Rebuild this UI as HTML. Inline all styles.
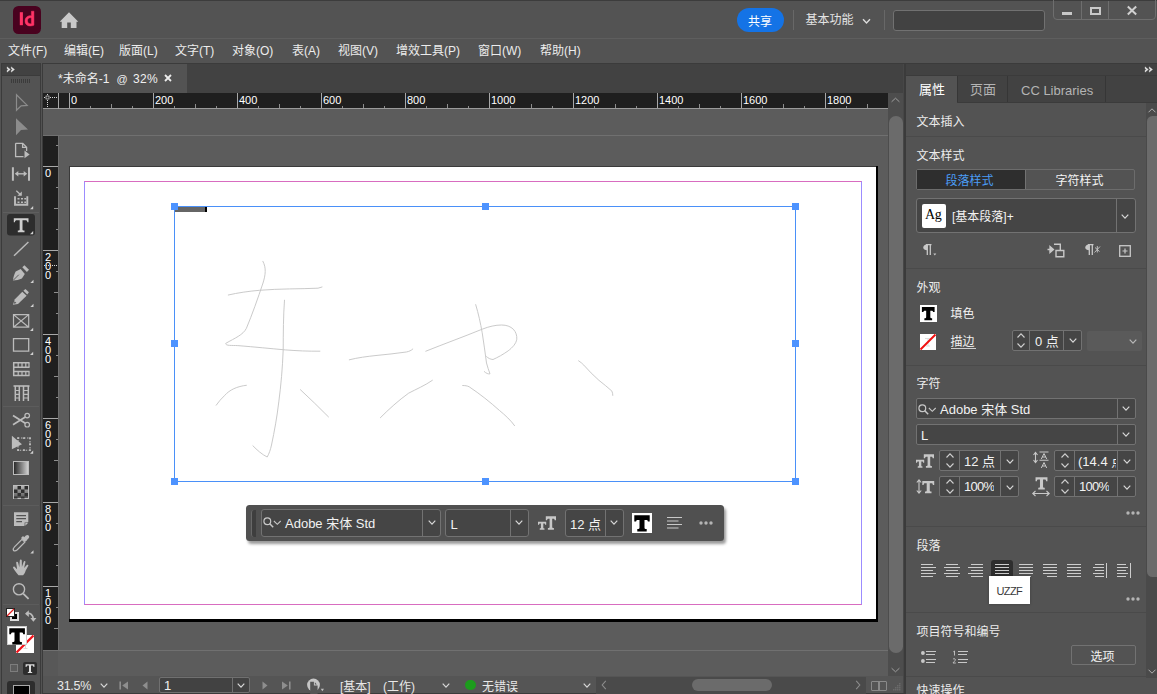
<!DOCTYPE html>
<html lang="zh">
<head>
<meta charset="utf-8">
<title>InDesign</title>
<style>
*{box-sizing:border-box;margin:0;padding:0}
html,body{width:1157px;height:694px;overflow:hidden;background:#535353;font-family:"Liberation Sans","Noto Sans CJK SC",sans-serif;font-size:12px;color:#e0e0e0}
.abs,#root *{position:absolute}
#root{position:relative;width:1157px;height:694px;overflow:hidden;background:#535353}
.t{white-space:nowrap;line-height:14px;color:#e6e6e6}
svg{overflow:visible}
.rl{font-size:11px;line-height:11px;color:#fff;white-space:nowrap}
.h{width:7px;height:7px;background:#4d93ff}
.dd{background:#454545;border:1px solid #727272;border-radius:3px}
.dv{width:1px;background:#727272}
/* top */
#appbar{left:0;top:0;width:1157px;height:39px;background:#535353}
#topline{left:0;top:0;width:1157px;height:1px;background:#3c3c3c}
#sep1{left:0;top:38px;width:1157px;height:2px;background:#5e5e5e}
#menubar{left:0;top:39px;width:1157px;height:23px;background:#535353}
#menubar .t{top:4.800px;font-size:12px;color:#ececec;margin-left:-1px}
#work{left:0;top:62px;width:1157px;height:632px;background:#535353}
</style>
</head>
<body>
<div id="root">
<!-- APPBAR -->
<div id="appbar"></div>
<div id="topline"></div>
<div id="sep1"></div>
<div id="menubar">
<span class="t" style="left:9px">文件(F)</span>
<span class="t" style="left:65px">编辑(E)</span>
<span class="t" style="left:120px">版面(L)</span>
<span class="t" style="left:176px">文字(T)</span>
<span class="t" style="left:233px">对象(O)</span>
<span class="t" style="left:293px">表(A)</span>
<span class="t" style="left:339px">视图(V)</span>
<span class="t" style="left:397px">增效工具(P)</span>
<span class="t" style="left:479px">窗口(W)</span>
<span class="t" style="left:541px">帮助(H)</span>
</div>
<div id="work"></div>

<!-- Id logo -->
<div style="left:13px;top:6px;width:28px;height:28px;background:#49021f;border-radius:5.5px"></div>
<svg style="left:13px;top:6px" width="28" height="28" viewBox="0 0 28 28"><rect x="6.800" y="6.200" width="3.100" height="13" fill="#ff3366"/><path d="M20.9 5.2v14c-1 .45-2.300.75-3.700.75-3 0-5.200-1.700-5.200-5.050 0-3.100 2.200-5.250 5.300-5.250.4 0 .75.020 1.100.10V5.200zM18.400 11.900c-.3-.1-.65-.15-1.050-.15-1.700 0-2.850 1.200-2.850 3.050 0 2.100 1.250 3 2.750 3 .45 0 .85-.05 1.150-.17z" fill="#ff3366" stroke="#ff3366" stroke-width="0.500"/></svg>
<!-- home -->
<svg style="left:59px;top:11px" width="20" height="18" viewBox="0 0 20 18"><path d="M10 1.300L19.300 10.800H17.500V17H11.800V11.400H8.200V17H2.700V10.800H0.700z" fill="#c9c9c9"/></svg>
<!-- share -->
<div style="left:737px;top:8px;width:47px;height:24px;border-radius:12px;background:#1473e6"></div>
<span class="t" style="left:748.0px;top:14.5px;font-size:12px;color:#fff">共享</span>
<div style="left:792.500px;top:10px;width:1px;height:20px;background:#686868"></div>
<span class="t" style="left:805.5px;top:12.8px;font-size:12px;color:#e4e4e4">基本功能</span>
<svg style="left:862px;top:18.200px" width="9" height="7" viewBox="0 0 9 7"><path d="M1 1.200L4.500 5L8 1.200" fill="none" stroke="#dcdcdc" stroke-width="1.400"/></svg>
<div style="left:883.500px;top:10px;width:1px;height:20px;background:#686868"></div>
<div style="left:893px;top:10px;width:152px;height:21px;background:#424242;border:1px solid #717171;border-radius:3px"></div>
<!-- window controls -->
<div style="left:1053px;top:-2px;width:103px;height:22px;border:1px solid #6e6e6e;border-radius:0 0 4px 4px"></div>
<div style="left:1081px;top:1px;width:1px;height:18px;background:#6e6e6e"></div>
<div style="left:1108px;top:1px;width:1px;height:18px;background:#6e6e6e"></div>
<div style="left:1062px;top:12px;width:10px;height:3px;background:#c8c8c8"></div>
<div style="left:1090px;top:7px;width:11px;height:8px;border:2px solid #c8c8c8"></div>
<svg style="left:1127px;top:6px" width="10" height="9" viewBox="0 0 10 9"><path d="M0.800 0.500L9.200 8.500M9.200 0.500L0.800 8.500" stroke="#d0d0d0" stroke-width="2"/></svg>
<!--APPBAR-ITEMS-->

<div id="tb" style="left:1px;top:63px;width:40px;height:640px;background:#3b3b3b"></div>
<div style="left:2px;top:64px;width:38px;height:11px;background:#424242"></div>
<svg style="left:6px;top:66px" width="10" height="7" viewBox="0 0 10 7"><path d="M1 0.800L4.400 3.500L1 6.200V4.400L2.300 3.500L1 2.600zM5.200 0.800L8.600 3.500L5.200 6.200V4.400L6.500 3.500L5.200 2.600z" fill="#e4e4e4" stroke="#e4e4e4" stroke-width="0.300"/></svg>
<div style="left:2px;top:76px;width:38px;height:620px;background:#535353"></div>
<div style="left:11px;top:79px;width:20px;height:4px;background:repeating-linear-gradient(90deg,#3b3b3b 0,#3b3b3b 1px,transparent 1px,transparent 2px)"></div>
<svg id="tools" style="left:0;top:0" width="44" height="694" viewBox="0 0 44 694" fill="none">
<!-- selection -->
<path d="M16.500 94.800V110.300L21.100 105.800L27.200 105.400z" stroke="#8c8c8c" stroke-width="1.200" transform="translate(0,0)"/>
<!-- direct selection -->
<path d="M16 118.300V135.200L21 129.900L28 129.400z" fill="#8c8c8c"/>
<!-- page tool -->
<path d="M15.600 143.300H22.800L26.600 147.200V151M22.600 143.500V147.400H26.400M15.600 143.300V156.600H23.500" stroke="#bcbcbc" stroke-width="1.300"/>
<path d="M24.500 150.500V158.300L29.600 154.400z" fill="#bcbcbc"/>
<!-- gap tool -->
<path d="M12.900 167.200V180.800M29 167.200V180.800" stroke="#bcbcbc" stroke-width="2"/>
<path d="M17.500 173.800H24.500" stroke="#bcbcbc" stroke-width="1.400"/>
<path d="M14.800 173.800L18.300 171V176.600zM27.200 173.800L23.700 171V176.600z" fill="#bcbcbc"/>
<!-- content collector -->
<path d="M15 196.300V204.700H27.300V196.300" stroke="#bcbcbc" stroke-width="1.900"/>
<path d="M17.500 198h2v1.600h-2zM21 198h2v1.600h-2zM24.300 198h1.800v1.600h-1.800zM17.500 201.400h2v1.600h-2zM21 201.400h2v1.600h-2zM24.300 201.400h1.800v1.600h-1.800z" fill="#bcbcbc"/>
<path d="M16.300 190.800L20.300 194.400" stroke="#bcbcbc" stroke-width="1.300"/>
<path d="M21.800 191.600V195.800H17.400z" fill="#bcbcbc"/>
<path d="M33.200 209.300h-3.200l3.200-3.200z" fill="#d0d0d0"/>
<!-- separator -->
<path d="M3 212.500H39" stroke="#5e5e5e" stroke-width="1"/>
<!-- T tool selected -->
<rect x="7" y="214" width="28" height="21.500" rx="3" fill="#2d2d2d"/>
<path d="M13.800 218.200H28.500V222.300H27.400C27.200 220.700 26.800 220.300 25.200 220.300H22.500V229.400C22.500 230.200 22.800 230.400 24.500 230.500V232.300H17.800V230.500C19.400 230.400 19.700 230.200 19.700 229.400V220.300H17.100C15.500 220.300 15.100 220.700 14.900 222.300H13.800z" fill="#cfcfcf"/>
<path d="M33.200 234.300h-3.200l3.200-3.200z" fill="#d0d0d0"/>
<!-- line -->
<path d="M14 255.800L28.400 242" stroke="#bcbcbc" stroke-width="1.400"/>
<!-- pen -->
<path d="M12.900 280.600C13.300 277.300 14.300 274 15.700 271.600L20.700 268.900L24.800 273.900L21.900 278.600C19.300 279.800 16.200 280.400 12.900 280.600z" fill="#bcbcbc"/>
<path d="M13.300 280.200L18.800 274.700" stroke="#535353" stroke-width="0.900"/>
<path d="M22.300 267.200L24.400 265.200L29 269.800L26.900 272z" fill="#bcbcbc"/>
<path d="M33.500 283h-3.200l3.200-3.200z" fill="#d0d0d0"/>
<!-- pencil -->
<path d="M12.900 304.700L14.900 299.200L22.300 291.800L26.600 295.700L18 303.900z" fill="#bcbcbc"/>
<path d="M23.400 290.700L25.400 289.100L28.900 292.200L27.300 294.500z" fill="#bcbcbc"/>
<path d="M14.600 301.200L16.400 303L13.800 303.800z" fill="#535353"/>
<path d="M33.500 307h-3.200l3.200-3.200z" fill="#d0d0d0"/>
<!-- rect frame -->
<path d="M13.500 314.600H28.700V327.200H13.500zM13.500 314.600L28.700 327.200M28.700 314.600L13.500 327.200" stroke="#bcbcbc" stroke-width="1.200"/>
<path d="M33.200 331h-3.200l3.200-3.200z" fill="#d0d0d0"/>
<!-- rect -->
<path d="M13.500 338.600H28.700V351.100H13.500z" stroke="#bcbcbc" stroke-width="1.300"/>
<path d="M33.200 355h-3.200l3.200-3.200z" fill="#d0d0d0"/>
<!-- h grid -->
<path d="M13 362.800H29.500M13 367.300H29.500M13 371.500H29.500M13 375.500H29.500M13.700 362.800V375.500" stroke="#bcbcbc" stroke-width="1.500"/>
<path d="M18.200 362.800V367.300M22 362.800V367.300M25.800 362.800V367.300M29 362.800V367.300M18.200 371.500V375.500M22 371.500V375.500M25.800 371.500V375.500M29 371.500V375.500" stroke="#bcbcbc" stroke-width="1.200"/>
<!-- v grid -->
<path d="M13.500 386H29.500" stroke="#bcbcbc" stroke-width="1.600"/>
<path d="M15.300 386V401M19.300 386V401M23.500 386V401M28.300 386V401" stroke="#bcbcbc" stroke-width="1.500"/>
<path d="M15.300 390.500H19.300M15.300 394.300H19.300M15.300 398H19.300M23.500 390.500H28.300M23.500 394.300H28.300M23.500 398H28.300" stroke="#bcbcbc" stroke-width="1.200"/>
<!-- separator -->
<path d="M3 406.500H39" stroke="#5c5c5c" stroke-width="1"/>
<!-- scissors -->
<path d="M13 415.500L25.300 423.300M13 424.800L25.300 417" stroke="#bcbcbc" stroke-width="1.700"/>
<circle cx="27.200" cy="415.600" r="2.300" stroke="#bcbcbc" stroke-width="1.200"/>
<circle cx="27.200" cy="424.700" r="2.300" stroke="#bcbcbc" stroke-width="1.200"/>
<!-- free transform -->
<path d="M11.900 435.800V449.200L22 444.200z" fill="#bcbcbc"/>
<path d="M18 438H30V450.200H18z" stroke="#bcbcbc" stroke-width="1.100" stroke-dasharray="1.500 1.500"/>
<path d="M17.200 437.200h1.800v1.800h-1.800zM23.100 437.200h1.800v1.800h-1.800zM29.100 437.200h1.800v1.800h-1.800zM29.100 443.200h1.800v1.800h-1.800zM17.200 449.300h1.800v1.800h-1.800zM23.100 449.300h1.800v1.800h-1.800zM29.100 449.300h1.800v1.800h-1.800z" fill="#bcbcbc"/>
<path d="M33.200 453.800h-3.200l3.200-3.200z" fill="#d0d0d0"/>
<!-- note -->
<path d="M14 512.300H28.300V522L24.200 526H14z" fill="#bcbcbc"/>
<path d="M16.300 515.600H26M16.300 518.600H26M16.300 521.600H22" stroke="#535353" stroke-width="1.200"/>
<path d="M24.600 522.400H28.300L24.600 526z" fill="#535353"/>
<path d="M25.300 523H28L25.300 525.700z" fill="#bcbcbc"/>
<!-- eyedropper -->
<path d="M13.500 550.500C12.800 549.300 13.600 547.800 14.500 546.900L22 539.400L24.800 542.200L17.300 549.700C16.300 550.600 14.600 551.200 13.500 550.500z" stroke="#bcbcbc" stroke-width="1.200"/>
<path d="M21 538L23 536L27 540L25 542z" fill="#bcbcbc"/>
<path d="M23.500 538L25.600 535.800C26.600 534.800 28 534.800 28.700 535.500C29.400 536.200 29.400 537.600 28.400 538.600L26.200 540.700z" fill="#bcbcbc"/>
<path d="M33.500 553.500h-3.200l3.200-3.200z" fill="#d0d0d0"/>
<!-- hand -->
<path d="M18.500 575.200C16.500 573.200 14.800 570.600 13.200 568.100C12.600 567 13.800 566 14.800 566.900L17.100 569.300L16.200 562.800C16.100 561.500 17.800 561.300 18.100 562.600L19.300 567.200L19.800 560.500C19.900 559.200 21.700 559.200 21.800 560.500L21.900 567.100L23.700 561.700C24.100 560.500 25.700 561 25.400 562.200L24.100 567.900L26.800 565C27.600 564.100 28.900 565 28.200 566.100L25.700 570.600C25.100 572.600 24.300 574.100 23.100 575.200z" fill="#bcbcbc"/>
<!-- zoom -->
<circle cx="19" cy="589.300" r="5.600" stroke="#bcbcbc" stroke-width="1.400"/>
<path d="M23.200 593.600L28.600 598.800" stroke="#bcbcbc" stroke-width="1.800"/>
<path d="M3 505.500H39M3 604.500H39" stroke="#5c5c5c" stroke-width="1"/>
<!-- swap arrows -->
<path d="M26.500 613.500C30.500 612.500 33 615 33.300 619" stroke="#bcbcbc" stroke-width="1.700"/>
<path d="M25 613.700L28.800 610.300V617z" fill="#bcbcbc"/>
<path d="M30.300 618H36.400L33.400 621.800z" fill="#bcbcbc"/>
</svg>
<!-- gradient tool -->
<div style="left:13px;top:461px;width:16px;height:14px;border:1px solid #bcbcbc;background:linear-gradient(90deg,#2a2a2a,#cfcfcf)"></div>
<!-- gradient feather -->
<svg style="left:13px;top:485px" width="16" height="14" viewBox="0 0 16 14"><defs><linearGradient id="gf" x1="0" y1="0" x2="0" y2="1"><stop offset="0" stop-color="#3a3a3a" stop-opacity="0"/><stop offset="1" stop-color="#3a3a3a" stop-opacity="0.750"/></linearGradient></defs><rect x="0.500" y="0.500" width="15" height="13" fill="#b4b4b4" stroke="#bcbcbc"/><rect x="4.5" y="1.0" width="3.500" height="3.5" fill="#2a2a2a"/><rect x="11.5" y="1.0" width="3.500" height="3.5" fill="#2a2a2a"/><rect x="1.0" y="4.5" width="3.500" height="3.5" fill="#2a2a2a"/><rect x="8.0" y="4.5" width="3.500" height="3.5" fill="#2a2a2a"/><rect x="4.5" y="8.0" width="3.500" height="3.5" fill="#2a2a2a"/><rect x="11.5" y="8.0" width="3.500" height="3.5" fill="#2a2a2a"/><rect x="1.0" y="11.5" width="3.500" height="2.0" fill="#2a2a2a"/><rect x="8.0" y="11.5" width="3.500" height="2.0" fill="#2a2a2a"/><rect x="1" y="1" width="14" height="12" fill="url(#gf)"/></svg>
<!-- default fill/stroke -->
<div style="left:10px;top:612px;width:9px;height:9px;border:2px solid #dcdcdc;background:#000"></div>
<div style="left:6px;top:608px;width:9px;height:9px;border:1px solid #222;background:#fff"></div>
<svg style="left:6px;top:608px" width="9" height="9"><path d="M1 8L8 1" stroke="#e02020" stroke-width="1.200"/></svg>
<!-- fill / stroke -->
<div style="left:16px;top:635px;width:18px;height:18px;background:#fff"></div>
<svg style="left:16px;top:635px" width="18" height="18"><path d="M9.500 5.500v8M7.500 13.500h4M7.500 5.500h4" stroke="#d8d8d8" stroke-width="1"/><path d="M0.500 17.500L17.500 0.500" stroke="#f0141c" stroke-width="2.300"/></svg>
<div style="left:7px;top:625.500px;width:19.500px;height:19.500px;background:#fff;border:0.5px solid #ccc"></div>
<svg style="left:7px;top:625.500px" width="20" height="20" viewBox="0 0 20 20"><path d="M2.300 2.300H17.900V8.300H16.200C16 6.900 15.600 6.600 14.100 6.600H12.700V14.600C12.700 15.800 13.100 16 14.900 16.100V18.500H5.300V16.100C7.100 16 7.500 15.800 7.500 14.600V6.600H6.100C4.600 6.600 4.200 6.900 4 8.300H2.300z" fill="#000"/></svg>
<!-- formatting affects -->
<div style="left:10px;top:664px;width:8px;height:8px;border:1px solid #7d7d7d;background:#5c5c5c"></div>
<div style="left:23px;top:662px;width:14px;height:13px;background:#2d2d2d;border-radius:2px"></div>
<svg style="left:23px;top:662px" width="14" height="13" viewBox="0 0 14 13"><path d="M2.600 2.300h8.800v2.700h-.9c-.2-1.100-.4-1.400-1.500-1.400H8v5.700c0 .7.300.9 1.200.9v.9H4.800v-.9c.9 0 1.200-.2 1.200-.9V3.600H5c-1.100 0-1.300.3-1.500 1.400h-.9z" fill="#dcdcdc"/></svg>
<!-- view mode -->
<div style="left:7px;top:681px;width:28px;height:16px;background:#2d2d2d;border-radius:3px"></div>
<div style="left:13px;top:685px;width:16.500px;height:12px;background:#000;border:1px solid #a8a8a8"></div>
<!--TOOLBAR-->

<!-- doc window frame -->
<div style="left:42px;top:63px;width:863px;height:640px;background:#3b3b3b"></div>
<div style="left:43px;top:64px;width:860px;height:29px;background:#424242"></div>
<div style="left:43px;top:64px;width:144px;height:29px;background:#535353"></div>
<span class="t" style="left:58px;top:72.200px;font-size:12px;color:#f0f0f0">*未命名-1</span><span class="t" style="left:116.500px;top:72.200px;font-size:11px;color:#f0f0f0">@</span><span class="t" style="left:133px;top:72.200px;font-size:12px;color:#f0f0f0;letter-spacing:0.300px">32%</span>
<svg style="left:164px;top:74px" width="8" height="8" viewBox="0 0 8 8"><path d="M1 1L7 7M7 1L1 7" stroke="#ececec" stroke-width="1.800"/></svg>
<!-- pasteboard -->
<div style="left:43px;top:93px;width:845px;height:583px;background:#5c5c5c"></div>
<!-- h ruler -->
<div style="left:43px;top:93px;width:845px;height:15px;background:#1f1f1f"></div>
<div style="left:43px;top:108px;width:845px;height:1px;background:#9a9a9a"></div>
<div style="left:58px;top:93px;width:1px;height:16px;background:#a8a8a8"></div>
<svg style="left:43px;top:93px" width="15" height="15"><path d="M1 4.500H14M4.500 1V14" stroke="#d8d8d8" stroke-width="1" stroke-dasharray="1 1"/><rect x="3" y="3" width="3" height="3" fill="#1f1f1f" stroke="#d8d8d8" stroke-width="0.700"/></svg>
<div style="left:69px;top:93px;width:1px;height:15px;background:#a8a8a8"></div><span class="rl" style="left:71px;top:95px">0</span><div style="left:90px;top:106px;width:1px;height:2px;background:#8e8e8e"></div><div style="left:111px;top:104px;width:1px;height:4px;background:#8e8e8e"></div><div style="left:132px;top:106px;width:1px;height:2px;background:#8e8e8e"></div><div style="left:153px;top:93px;width:1px;height:15px;background:#a8a8a8"></div><span class="rl" style="left:155px;top:95px">200</span><div style="left:174px;top:106px;width:1px;height:2px;background:#8e8e8e"></div><div style="left:195px;top:104px;width:1px;height:4px;background:#8e8e8e"></div><div style="left:216px;top:106px;width:1px;height:2px;background:#8e8e8e"></div><div style="left:237px;top:93px;width:1px;height:15px;background:#a8a8a8"></div><span class="rl" style="left:239px;top:95px">400</span><div style="left:258px;top:106px;width:1px;height:2px;background:#8e8e8e"></div><div style="left:279px;top:104px;width:1px;height:4px;background:#8e8e8e"></div><div style="left:300px;top:106px;width:1px;height:2px;background:#8e8e8e"></div><div style="left:321px;top:93px;width:1px;height:15px;background:#a8a8a8"></div><span class="rl" style="left:323px;top:95px">600</span><div style="left:342px;top:106px;width:1px;height:2px;background:#8e8e8e"></div><div style="left:363px;top:104px;width:1px;height:4px;background:#8e8e8e"></div><div style="left:384px;top:106px;width:1px;height:2px;background:#8e8e8e"></div><div style="left:405px;top:93px;width:1px;height:15px;background:#a8a8a8"></div><span class="rl" style="left:407px;top:95px">800</span><div style="left:426px;top:106px;width:1px;height:2px;background:#8e8e8e"></div><div style="left:447px;top:104px;width:1px;height:4px;background:#8e8e8e"></div><div style="left:468px;top:106px;width:1px;height:2px;background:#8e8e8e"></div><div style="left:489px;top:93px;width:1px;height:15px;background:#a8a8a8"></div><span class="rl" style="left:491px;top:95px">1000</span><div style="left:510px;top:106px;width:1px;height:2px;background:#8e8e8e"></div><div style="left:531px;top:104px;width:1px;height:4px;background:#8e8e8e"></div><div style="left:552px;top:106px;width:1px;height:2px;background:#8e8e8e"></div><div style="left:573px;top:93px;width:1px;height:15px;background:#a8a8a8"></div><span class="rl" style="left:575px;top:95px">1200</span><div style="left:594px;top:106px;width:1px;height:2px;background:#8e8e8e"></div><div style="left:615px;top:104px;width:1px;height:4px;background:#8e8e8e"></div><div style="left:636px;top:106px;width:1px;height:2px;background:#8e8e8e"></div><div style="left:657px;top:93px;width:1px;height:15px;background:#a8a8a8"></div><span class="rl" style="left:659px;top:95px">1400</span><div style="left:678px;top:106px;width:1px;height:2px;background:#8e8e8e"></div><div style="left:699px;top:104px;width:1px;height:4px;background:#8e8e8e"></div><div style="left:720px;top:106px;width:1px;height:2px;background:#8e8e8e"></div><div style="left:741px;top:93px;width:1px;height:15px;background:#a8a8a8"></div><span class="rl" style="left:743px;top:95px">1600</span><div style="left:762px;top:106px;width:1px;height:2px;background:#8e8e8e"></div><div style="left:783px;top:104px;width:1px;height:4px;background:#8e8e8e"></div><div style="left:804px;top:106px;width:1px;height:2px;background:#8e8e8e"></div><div style="left:825px;top:93px;width:1px;height:15px;background:#a8a8a8"></div><span class="rl" style="left:827px;top:95px">1800</span><div style="left:846px;top:106px;width:1px;height:2px;background:#8e8e8e"></div><div style="left:867px;top:104px;width:1px;height:4px;background:#8e8e8e"></div>
<!-- canvas borders -->
<div style="left:43px;top:135px;width:845px;height:1px;background:#707070"></div>
<div style="left:43px;top:650px;width:845px;height:1px;background:#707070"></div>
<!-- v ruler -->
<div style="left:43px;top:136px;width:15px;height:514px;background:#1f1f1f"></div>
<div style="left:58px;top:136px;width:1px;height:515px;background:#6e6e6e"></div>
<div style="left:56px;top:145px;width:2px;height:1px;background:#8e8e8e"></div><div style="left:43px;top:166px;width:15px;height:1px;background:#a8a8a8"></div><span class="rl" style="left:45px;top:169px;line-height:9px">0</span><div style="left:56px;top:187px;width:2px;height:1px;background:#8e8e8e"></div><div style="left:54px;top:208px;width:4px;height:1px;background:#8e8e8e"></div><div style="left:56px;top:229px;width:2px;height:1px;background:#8e8e8e"></div><div style="left:43px;top:250px;width:15px;height:1px;background:#a8a8a8"></div><span class="rl" style="left:45px;top:253px;line-height:9px">2<br>0<br>0</span><div style="left:56px;top:271px;width:2px;height:1px;background:#8e8e8e"></div><div style="left:54px;top:292px;width:4px;height:1px;background:#8e8e8e"></div><div style="left:56px;top:313px;width:2px;height:1px;background:#8e8e8e"></div><div style="left:43px;top:334px;width:15px;height:1px;background:#a8a8a8"></div><span class="rl" style="left:45px;top:337px;line-height:9px">4<br>0<br>0</span><div style="left:56px;top:355px;width:2px;height:1px;background:#8e8e8e"></div><div style="left:54px;top:376px;width:4px;height:1px;background:#8e8e8e"></div><div style="left:56px;top:397px;width:2px;height:1px;background:#8e8e8e"></div><div style="left:43px;top:418px;width:15px;height:1px;background:#a8a8a8"></div><span class="rl" style="left:45px;top:421px;line-height:9px">6<br>0<br>0</span><div style="left:56px;top:439px;width:2px;height:1px;background:#8e8e8e"></div><div style="left:54px;top:460px;width:4px;height:1px;background:#8e8e8e"></div><div style="left:56px;top:481px;width:2px;height:1px;background:#8e8e8e"></div><div style="left:43px;top:502px;width:15px;height:1px;background:#a8a8a8"></div><span class="rl" style="left:45px;top:505px;line-height:9px">8<br>0<br>0</span><div style="left:56px;top:523px;width:2px;height:1px;background:#8e8e8e"></div><div style="left:54px;top:544px;width:4px;height:1px;background:#8e8e8e"></div><div style="left:56px;top:565px;width:2px;height:1px;background:#8e8e8e"></div><div style="left:43px;top:586px;width:15px;height:1px;background:#a8a8a8"></div><span class="rl" style="left:45px;top:589px;line-height:9px">1<br>0<br>0<br>0</span><div style="left:56px;top:607px;width:2px;height:1px;background:#8e8e8e"></div><div style="left:54px;top:628px;width:4px;height:1px;background:#8e8e8e"></div>
<div style="left:44px;top:265px;width:14px;height:1px;background:repeating-linear-gradient(90deg,#d8d8d8 0,#d8d8d8 1px,transparent 1px,transparent 2px)"></div>
<!-- page -->
<div style="left:69px;top:166px;width:809px;height:455.500px;background:#000"></div><div style="left:69px;top:166px;width:807px;height:1px;background:#3a3a3a"></div><div style="left:69px;top:166px;width:1px;height:453px;background:#3a3a3a"></div>
<div style="left:70px;top:167px;width:806px;height:452px;background:#fff"></div>
<div style="left:84px;top:181px;width:778px;height:424px;border:1px solid #9c8cff;border-top-color:#d86cc0;border-bottom-color:#d86cc0"></div>
<!-- handwriting -->
<svg style="left:0;top:0" width="1157" height="694" viewBox="0 0 1157 694" fill="none" stroke="#c4c4c4" stroke-width="0.900" stroke-linecap="round">
<path d="M262.900 261.300C266.500 268 265.500 275 263 283C258 298 252 315 246.400 328.300C243 335 235 338 225.700 343.400C225.500 346 232 345.300 237.800 345.600C255 347 270 348.500 285.300 349.900C297 350.800 308 351.300 319.900 351.200"/>
<path d="M228.300 295C238 292.800 248 291.300 259.400 290.300C280 288.600 300 289 318 288.200L322 287"/>
<path d="M284.500 300.200C283.300 316 283.300 333 283.200 349.900C282.500 368 281 385 278.800 401.800C277 417 274.500 431 271.500 445C270.500 449.500 269.200 453.500 267.200 457C262 454.500 257 450 252.900 445.800"/>
<path d="M246.400 385.300C237 386.300 229.500 390 224.800 395.300C221.500 398.500 218.500 401.800 216.200 405.200"/>
<path d="M300.400 389.700C310 398.500 319 407.500 328.500 416.900"/>
<path d="M349.300 359.800C358 357.600 367 356.500 376 355.500C386 354.500 396 353.500 406.300 352C409 351.500 411.300 350.500 412.800 349"/>
<path d="M425.800 351.200C445 343.500 463 337 482.200 329.200C489 326.500 495.500 325 501.600 325C506.500 325 510.500 326.500 513.300 329.200C516 332 517 335.500 516.800 339.200C516 343.800 512.500 347.500 508.100 350.900C503 354.500 498 357.300 493 359.500C490.500 359.300 488 358.300 486.500 356.500"/>
<path d="M475.700 304.600C478.500 314 480.500 323 482.200 332.700C484 343 485 353 486.500 363C487.500 367 488.800 370.500 490 373.800C488.500 374.300 486 373.300 484.300 371.600"/>
<path d="M432.400 380.300C425 385.500 416.500 389 408.600 393.200C398.500 400.500 389 409 380.400 417.700"/>
<path d="M462.700 385.500C465 385.500 467.300 385.800 469.200 386.800C480 394 490 402 499.500 410.500C505 415 511 420.500 514.600 425.700"/>
<path d="M578.600 360.800C580.500 362 582.300 363.500 583.800 365.100C588.500 370.500 593.500 375.500 598.900 380.300C603.500 384 608 387.500 611.900 391.100C612.500 392.500 612.800 394 612.800 395.400"/>
</svg>
<!-- text frame -->
<div style="left:174px;top:206px;width:622px;height:276px;border:1px solid #4a90f8"></div>
<div style="left:175px;top:207px;width:30px;height:4.500px;background:#666"></div>
<div style="left:205px;top:207px;width:1.500px;height:5px;background:#000"></div>
<div class="h" style="left:171px;top:203px"></div><div class="h" style="left:482px;top:203px"></div><div class="h" style="left:792px;top:203px"></div>
<div class="h" style="left:171px;top:340px"></div><div class="h" style="left:792px;top:340px"></div>
<div class="h" style="left:171px;top:478px"></div><div class="h" style="left:482px;top:478px"></div><div class="h" style="left:792px;top:478px"></div>

<div style="left:246px;top:505px;width:478px;height:36px;background:#505050;border-radius:3.500px;box-shadow:2px 3px 3px rgba(0,0,0,.4)"></div>
<div style="left:250.500px;top:509.500px;width:5px;height:27px;background:#3e3e3e;border-left:1px solid #686868;border-radius:3px 0 0 3px"></div>
<div class="dd" style="left:261px;top:509px;width:180px;height:28px"></div>
<div class="dv" style="left:422px;top:510px;height:26px"></div>
<svg style="left:262.800px;top:517px" width="19" height="11" viewBox="0 0 19 11"><circle cx="4.300" cy="4.300" r="3.400" fill="none" stroke="#c8c8c8" stroke-width="1.200"/><path d="M6.800 6.800L10.200 10.200" stroke="#c8c8c8" stroke-width="1.500"/><path d="M10.900 4L14.300 7.300L17.700 4" fill="none" stroke="#c8c8c8" stroke-width="1.100"/></svg>
<span class="t" style="left:285px;top:517.3px;font-size:13px;color:#f2f2f2">Adobe 宋体 Std</span>
<svg style="left:428px;top:520px" width="8" height="5" viewBox="0 0 8 5"><path d="M0.700 0.700L4.0 4.2L7.3 0.700" fill="none" stroke="#d8d8d8" stroke-width="1.200"/></svg>
<div class="dd" style="left:445px;top:509px;width:84px;height:28px"></div>
<div class="dv" style="left:510px;top:510px;height:26px"></div>
<span class="t" style="left:450.500px;top:517.5px;font-size:13px;color:#f2f2f2">L</span>
<svg style="left:515px;top:520px" width="8" height="5" viewBox="0 0 8 5"><path d="M0.700 0.700L4.0 4.2L7.3 0.700" fill="none" stroke="#d8d8d8" stroke-width="1.200"/></svg>
<svg style="left:538px;top:516.3px" width="18" height="14" viewBox="0 0 18 14"><path d="M7.800 0.200H18V4.200H16.700C16.500 3 16.200 2.700 15 2.700H14.200V10.900C14.200 11.700 14.500 11.900 15.900 12V13.700H9.900V12C11.300 11.900 11.600 11.700 11.600 10.900V2.700H10.800C9.600 2.700 9.300 3 9.100 4.200H7.800z" fill="#c8c8c8"/><path d="M0 5.700H8.200V8.800H7.100C7 7.800 6.800 7.600 6 7.600H5.300V11.600C5.300 12.200 5.500 12.400 6.500 12.500V13.700H1.700V12.500C2.700 12.400 2.900 12.200 2.900 11.600V7.600H2.200C1.400 7.600 1.200 7.800 1.100 8.800H0z" fill="#c8c8c8"/></svg>
<div class="dd" style="left:565px;top:509px;width:58.500px;height:28px"></div>
<div class="dv" style="left:605px;top:510px;height:26px"></div>
<span class="t" style="left:570px;top:517.5px;font-size:13px;color:#f2f2f2">12 点</span>
<svg style="left:610px;top:520px" width="8" height="5" viewBox="0 0 8 5"><path d="M0.700 0.700L4.0 4.2L7.3 0.700" fill="none" stroke="#d8d8d8" stroke-width="1.200"/></svg>
<div style="left:632px;top:513px;width:20px;height:20px;background:#fff"></div><svg style="left:632px;top:513px" width="20" height="20" viewBox="0 0 20 20"><path d="M2.300 2.300H17.700V8.600H15.900C15.700 7.200 15.300 6.900 13.800 6.900H12.500V14.600C12.500 15.800 12.900 16 14.700 16.100V18.500H5.300V16.100C7.100 16 7.500 15.800 7.500 14.600V6.900H6.200C4.700 6.900 4.300 7.200 4.100 8.600H2.300z" fill="#000"/></svg>
<svg style="left:667px;top:516px" width="16" height="14" viewBox="0 0 16 14"><path d="M0 1.500H15M0 5H11.500M0 8.500H15M0 12H11.500" stroke="#c8c8c8" stroke-width="1.100"/></svg>
<svg style="left:699px;top:521.3px" width="14" height="4" viewBox="0 0 14 4"><circle cx="2" cy="2" r="1.700" fill="#b4b4b4"/><circle cx="7" cy="2" r="1.700" fill="#b4b4b4"/><circle cx="12" cy="2" r="1.700" fill="#b4b4b4"/></svg>

<!-- v scrollbar -->
<div style="left:888px;top:93px;width:15px;height:583px;background:#4d4d4d"></div>
<svg style="left:891px;top:97px" width="9" height="6" viewBox="0 0 9 6"><path d="M0.600 4.800L4.500 1.200L8.400 4.800" fill="none" stroke="#a6a6a6" stroke-width="0.900"/></svg>
<svg style="left:891px;top:667px" width="9" height="6" viewBox="0 0 9 6"><path d="M0.600 1.200L4.500 4.800L8.400 1.200" fill="none" stroke="#a6a6a6" stroke-width="0.900"/></svg>
<div style="left:889px;top:116px;width:13.500px;height:536.500px;background:#6b6b6b;border-radius:6.750px"></div>
<div style="left:903px;top:64px;width:1px;height:630px;background:#474747"></div>
<!-- status bar -->
<div style="left:43px;top:651px;width:15px;height:25px;background:#585858"></div><div style="left:43px;top:676px;width:860px;height:18px;background:#555"></div><div style="left:42px;top:693px;width:863px;height:1px;background:#3b3b3b"></div>

<span class="t" style="left:57px;top:679px;font-size:12.500px;letter-spacing:-0.300px;color:#e8e8e8">31.5%</span>
<svg style="left:100px;top:682.5px" width="8" height="5" viewBox="0 0 8 5"><path d="M0.700 0.700L4.0 4.2L7.3 0.700" fill="none" stroke="#d8d8d8" stroke-width="1.200"/></svg>
<svg style="left:119px;top:681px" width="10" height="9" viewBox="0 0 10 9"><path d="M1.200 0.500V8.500" stroke="#8e8e8e" stroke-width="1.600"/><path d="M9 0.500V8.500L3.200 4.500z" fill="#8e8e8e"/></svg>
<svg style="left:142px;top:681px" width="6" height="9" viewBox="0 0 6 9"><path d="M5.500 0.500V8.500L0.500 4.500z" fill="#8e8e8e"/></svg>
<div style="left:159px;top:677px;width:91px;height:16px;background:#424242;border:1px solid #707070;border-radius:2px"></div>
<div style="left:231.500px;top:678px;width:1px;height:14px;background:#707070"></div>
<span class="t" style="left:164px;top:679px;font-size:13px;color:#f0f0f0">1</span>
<svg style="left:237px;top:682.5px" width="8" height="5" viewBox="0 0 8 5"><path d="M0.700 0.700L4.0 4.2L7.3 0.700" fill="none" stroke="#d8d8d8" stroke-width="1.200"/></svg>
<svg style="left:262px;top:681px" width="6" height="9" viewBox="0 0 6 9"><path d="M0.500 0.500V8.500L5.500 4.500z" fill="#8e8e8e"/></svg>
<svg style="left:281px;top:681px" width="10" height="9" viewBox="0 0 10 9"><path d="M8.800 0.500V8.500" stroke="#8e8e8e" stroke-width="1.600"/><path d="M1 0.500V8.500L6.800 4.500z" fill="#8e8e8e"/></svg>
<svg style="left:306px;top:678px" width="18" height="16" viewBox="0 0 18 16"><circle cx="7.500" cy="7" r="6.400" fill="#c6c6c6"/><path d="M4.200 3.700H7.900V7.500H11.600V16H4.200z" fill="#555"/><path d="M8.900 4.300L10.800 6.500H8.900z" fill="#555"/><path d="M14.800 10.800H18L16.400 13.200z" fill="#c0c0c0"/></svg>
<span class="t" style="left:340.0px;top:680.3px;font-size:12px;color:#e8e8e8">[基本]</span><span class="t" style="left:383.0px;top:680.3px;font-size:12px;color:#e8e8e8">(工作)</span>
<svg style="left:442px;top:682.5px" width="8" height="5" viewBox="0 0 8 5"><path d="M0.700 0.700L4.0 4.2L7.3 0.700" fill="none" stroke="#d8d8d8" stroke-width="1.200"/></svg>
<div style="left:465px;top:679.800px;width:10.600px;height:10.600px;border-radius:50%;background:#1c9c1c"></div>
<span class="t" style="left:482.0px;top:680.4px;font-size:12px;color:#e8e8e8">无错误</span>
<svg style="left:583px;top:682.5px" width="8" height="5" viewBox="0 0 8 5"><path d="M0.700 0.700L4.0 4.2L7.3 0.700" fill="none" stroke="#d8d8d8" stroke-width="1.200"/></svg>
<!-- h scrollbar -->
<div style="left:596px;top:677px;width:270px;height:17px;background:#4a4a4a"></div>
<svg style="left:601px;top:680px" width="6" height="10" viewBox="0 0 6 10"><path d="M4.800 0.800L1.200 5L4.800 9.200" fill="none" stroke="#8c8c8c" stroke-width="1.100"/></svg>
<svg style="left:855px;top:680px" width="6" height="10" viewBox="0 0 6 10"><path d="M1.200 0.800L4.800 5L1.200 9.200" fill="none" stroke="#8c8c8c" stroke-width="1.100"/></svg>
<div style="left:692px;top:679px;width:80px;height:12px;background:#6b6b6b;border-radius:6px"></div>
<div style="left:870.500px;top:680.500px;width:16px;height:10px;border:1.500px solid #8a8a8a;border-radius:1px"></div>
<div style="left:878px;top:681px;width:1.500px;height:9px;background:#8a8a8a"></div>
<svg style="left:892px;top:682px" width="10" height="10" viewBox="0 0 10 10"><path d="M9 1V9H1z" fill="none"/><g fill="#6a6a6a"><rect x="7" y="1" width="1.500" height="1.500"/><rect x="5" y="3" width="1.500" height="1.500"/><rect x="7" y="3" width="1.500" height="1.500"/><rect x="3" y="5" width="1.500" height="1.500"/><rect x="5" y="5" width="1.500" height="1.500"/><rect x="7" y="5" width="1.500" height="1.500"/><rect x="1" y="7" width="1.500" height="1.500"/><rect x="3" y="7" width="1.500" height="1.500"/><rect x="5" y="7" width="1.500" height="1.500"/><rect x="7" y="7" width="1.500" height="1.500"/></g></svg>

<!--DOC-->

<div style="left:905px;top:63px;width:253px;height:640px;background:#3b3b3b"></div>
<div style="left:906px;top:64px;width:251px;height:11px;background:#424242"></div>
<svg style="left:1144px;top:66px" width="10" height="7" viewBox="0 0 10 7"><path d="M1 0.800L4.400 3.500L1 6.200V4.400L2.300 3.500L1 2.600zM5.200 0.800L8.600 3.500L5.200 6.200V4.400L6.500 3.500L5.200 2.600z" fill="#e4e4e4" stroke="#e4e4e4" stroke-width="0.300"/></svg>
<div style="left:906px;top:76px;width:251px;height:26px;background:#424242"></div>
<div style="left:906px;top:76px;width:51px;height:27px;background:#535353"></div>
<div style="left:957px;top:76px;width:1px;height:26px;background:#363636"></div>
<div style="left:1007px;top:76px;width:1px;height:26px;background:#363636"></div>
<div style="left:1105px;top:76px;width:1px;height:26px;background:#363636"></div>
<span class="t" style="left:919px;top:83.2px;font-size:13px;color:#fff">属性</span>
<span class="t" style="left:970px;top:83.2px;font-size:13px;color:#b4b4b4">页面</span>
<span class="t" style="left:1021px;top:83.7px;font-size:13px;color:#b4b4b4">CC Libraries</span>
<div style="left:906px;top:103px;width:251px;height:600px;background:#535353"></div>
<!-- scrollbar -->
<div style="left:1146px;top:103px;width:11px;height:575px;background:#4a4a4a"></div>
<svg style="left:1147.500px;top:107.500px" width="8" height="5" viewBox="0 0 8 5"><path d="M0.500 4.300L4 0.800L7.500 4.300" fill="none" stroke="#b0b0b0" stroke-width="1"/></svg>
<svg style="left:1147.500px;top:668.500px" width="8" height="5" viewBox="0 0 8 5"><path d="M0.500 0.700L4 4.200L7.500 0.700" fill="none" stroke="#b0b0b0" stroke-width="1"/></svg>
<div style="left:1147px;top:115.500px;width:11px;height:461px;background:#6b6b6b;border-radius:5.500px 0 0 5.500px"></div>
<!-- sections -->
<span class="t" style="left:916.500px;top:114.5px;color:#ececec">文本插入</span>
<div style="left:906px;top:136px;width:240px;height:1px;background:#4a4a4a"></div>
<span class="t" style="left:916.500px;top:149.0px;color:#ececec">文本样式</span>
<div style="left:916px;top:169px;width:219px;height:21px;border:1px solid #6c6c6c;border-radius:2px;background:#535353"></div>
<div style="left:917px;top:170px;width:108px;height:19px;background:#2e2e2e"></div>
<div class="dv" style="left:1025px;top:170px;height:19px"></div>
<span class="t" style="left:945.5px;top:174.3px;color:#4b9cf5">段落样式</span>
<span class="t" style="left:1055.5px;top:174.3px;color:#f4f4f4">字符样式</span>
<div class="dd" style="left:916px;top:198px;width:219.500px;height:35px"></div>
<div class="dv" style="left:1116px;top:199px;height:33px"></div>
<div style="left:922px;top:203.500px;width:24px;height:24px;background:#fff;border-radius:2px"></div>
<span class="t" style="left:925px;top:208px;font-family:'Liberation Serif',serif;font-size:14px;color:#000;letter-spacing:-0.400px">Ag</span>
<span class="t" style="left:952px;top:209.500px;color:#f2f2f2">[基本段落]+</span>
<svg style="left:1121px;top:213.5px" width="8" height="5" viewBox="0 0 8 5"><path d="M0.700 0.700L4.0 4.2L7.3 0.700" fill="none" stroke="#d8d8d8" stroke-width="1.200"/></svg>
<!-- icon row -->
<svg style="left:922px;top:244px" width="16" height="13" viewBox="0 0 16 13"><path d="M3.800 0.600H9.500M5.300 0.600V11M8.300 0.600V11" stroke="#c8c8c8" stroke-width="1.300" fill="none"/><path d="M5.300 0.600C2.800 0.600 1.300 1.800 1.300 3.500C1.300 5.200 2.800 6.300 5.300 6.300z" fill="#c8c8c8"/><path d="M11.300 9.500H14.300L12.800 11.500z" fill="#c8c8c8"/></svg>
<svg style="left:1047px;top:243px" width="18" height="15" viewBox="0 0 18 15"><path d="M7 1.300H13.300V7.500M16.800 7.500V13.700H9V7.500z" stroke="#c8c8c8" stroke-width="1.400" fill="none"/><path d="M0.500 6.500H4.500M3 3.500L6.500 6.500L3 9.500z" stroke="#c8c8c8" stroke-width="1.300" fill="#c8c8c8"/></svg>
<svg style="left:1084px;top:244px" width="18" height="13" viewBox="0 0 18 13"><path d="M3.800 0.600H9.500M5.300 0.600V11M8.300 0.600V11" stroke="#c8c8c8" stroke-width="1.300" fill="none"/><path d="M5.300 0.600C2.800 0.600 1.300 1.800 1.300 3.500C1.300 5.200 2.800 6.300 5.300 6.300z" fill="#c8c8c8"/><path d="M10.500 8.500L16 2.500M11 3.500L15.500 7.500M13.300 2V8.500" stroke="#c8c8c8" stroke-width="0.900"/></svg>
<svg style="left:1118.500px;top:244.500px" width="12" height="12" viewBox="0 0 12 12"><rect x="0.700" y="0.700" width="10.600" height="10.600" fill="none" stroke="#c8c8c8" stroke-width="1.300"/><path d="M3.500 6H8.500M6 3.500V8.500" stroke="#c8c8c8" stroke-width="1.200"/></svg>
<div style="left:906px;top:268px;width:240px;height:1px;background:#4a4a4a"></div>
<span class="t" style="left:916.500px;top:280.5px;color:#ececec">外观</span>
<div style="left:920px;top:305px;width:16.5px;height:16.5px;background:#fff"></div><svg style="left:920px;top:305px" width="16.5" height="16.5" viewBox="0 0 20 20"><path d="M2.300 2.300H17.700V8.600H15.900C15.700 7.200 15.300 6.900 13.800 6.900H12.500V14.600C12.500 15.800 12.900 16 14.700 16.100V18.500H5.300V16.100C7.100 16 7.500 15.800 7.500 14.600V6.900H6.200C4.700 6.900 4.300 7.200 4.100 8.600H2.300z" fill="#000"/></svg>
<span class="t" style="left:950.500px;top:306.7px;color:#f2f2f2">填色</span>
<div style="left:920px;top:333.500px;width:16px;height:16px;background:#fff"></div>
<svg style="left:920px;top:333.500px" width="16" height="16" viewBox="0 0 16 16"><path d="M5 4.500H11M8 4.500V12M6 12H10" stroke="#dcdcdc" stroke-width="1"/><path d="M0.500 15.500L15.500 0.500" stroke="#f01010" stroke-width="2"/></svg>
<span class="t" style="left:950.500px;top:334.7px;color:#f2f2f2">描边</span><div style="left:950.500px;top:348px;width:25.500px;height:1px;background:#cfcfcf"></div>
<div class="dd" style="left:1012px;top:330px;width:69.500px;height:21px;border-radius:2px"></div>
<div class="dv" style="left:1029px;top:331px;height:19px"></div><div class="dv" style="left:1063px;top:331px;height:19px"></div>
<svg style="left:1017.0px;top:333px" width="8" height="15" viewBox="0 0 8 15"><path d="M0.500 4.500L4 0.800L7.500 4.500M0.500 10.500L4 14.200L7.500 10.500" fill="none" stroke="#d0d0d0" stroke-width="1.100"/></svg>
<span class="t" style="left:1035px;top:334.5px;font-size:13px;color:#f2f2f2;overflow:hidden;max-width:27px">0 点</span>
<svg style="left:1068.5px;top:338px" width="8" height="5" viewBox="0 0 8 5"><path d="M0.700 0.700L4.0 4.2L7.3 0.700" fill="none" stroke="#d8d8d8" stroke-width="1.200"/></svg>
<div style="left:1087px;top:330.500px;width:55px;height:20.500px;background:#5a5a5a;border-radius:2px"></div>
<svg style="left:1128.5px;top:338.5px" width="8" height="5" viewBox="0 0 8 5"><path d="M0.700 0.700L4.0 4.2L7.3 0.700" fill="none" stroke="#b8b8b8" stroke-width="1.200"/></svg>
<div style="left:906px;top:365px;width:240px;height:1px;background:#4a4a4a"></div>
<span class="t" style="left:916.500px;top:377.0px;color:#ececec">字符</span>
<div class="dd" style="left:916px;top:398px;width:219.500px;height:21px;border-radius:2px"></div>
<div class="dv" style="left:1117px;top:399px;height:19px"></div>
<svg style="left:917.800px;top:403.500px" width="19" height="11" viewBox="0 0 19 11"><circle cx="4.300" cy="4.300" r="3.400" fill="none" stroke="#c8c8c8" stroke-width="1.200"/><path d="M6.800 6.800L10.200 10.200" stroke="#c8c8c8" stroke-width="1.500"/><path d="M10.900 4L14.300 7.300L17.700 4" fill="none" stroke="#c8c8c8" stroke-width="1.100"/></svg>
<span class="t" style="left:940px;top:403.3px;font-size:13px;color:#f2f2f2">Adobe 宋体 Std</span>
<svg style="left:1122px;top:406px" width="8" height="5" viewBox="0 0 8 5"><path d="M0.700 0.700L4.0 4.2L7.3 0.700" fill="none" stroke="#d8d8d8" stroke-width="1.200"/></svg>
<div class="dd" style="left:916px;top:424px;width:219.500px;height:21px;border-radius:2px"></div>
<div class="dv" style="left:1117px;top:425px;height:19px"></div>
<span class="t" style="left:921px;top:428.800px;font-size:13px;color:#f2f2f2">L</span>
<svg style="left:1122px;top:432px" width="8" height="5" viewBox="0 0 8 5"><path d="M0.700 0.700L4.0 4.2L7.3 0.700" fill="none" stroke="#d8d8d8" stroke-width="1.200"/></svg>
<svg style="left:916px;top:453.5px" width="18" height="14" viewBox="0 0 18 14"><path d="M7.800 0.200H18V4.200H16.700C16.500 3 16.200 2.700 15 2.700H14.200V10.900C14.200 11.700 14.500 11.900 15.900 12V13.700H9.900V12C11.300 11.900 11.600 11.700 11.600 10.900V2.700H10.800C9.600 2.700 9.300 3 9.100 4.200H7.800z" fill="#c8c8c8"/><path d="M0 5.700H8.200V8.800H7.100C7 7.800 6.800 7.600 6 7.600H5.300V11.600C5.300 12.200 5.500 12.400 6.500 12.500V13.700H1.700V12.500C2.700 12.400 2.900 12.200 2.900 11.600V7.600H2.200C1.400 7.600 1.200 7.800 1.100 8.800H0z" fill="#c8c8c8"/></svg>
<div class="dd" style="left:939px;top:450px;width:79.500px;height:21px;border-radius:2px"></div>
<div class="dv" style="left:959px;top:451px;height:19px"></div><div class="dv" style="left:1000px;top:451px;height:19px"></div>
<svg style="left:945.5px;top:453px" width="8" height="15" viewBox="0 0 8 15"><path d="M0.500 4.500L4 0.800L7.500 4.500M0.500 10.500L4 14.200L7.500 10.500" fill="none" stroke="#d0d0d0" stroke-width="1.100"/></svg>
<span class="t" style="left:964px;top:454.500px;font-size:13px;color:#f2f2f2;overflow:hidden;max-width:35px">12 点</span>
<svg style="left:1005.5px;top:458.5px" width="8" height="5" viewBox="0 0 8 5"><path d="M0.700 0.700L4.0 4.2L7.3 0.700" fill="none" stroke="#d8d8d8" stroke-width="1.200"/></svg>
<svg style="left:1033px;top:451px" width="16" height="18" viewBox="0 0 16 18"><path d="M2.500 2V11M0.500 4L2.500 1.500L4.500 4M0.500 9L2.500 11.500L4.500 9" stroke="#c8c8c8" stroke-width="1.100" fill="none"/><path d="M6.500 1H15.500M6.500 9.300H15.500" stroke="#c8c8c8" stroke-width="1.100"/><path d="M8.300 8L11 2.500L13.700 8M9.300 6H12.700M8.300 17L11 11.500L13.700 17M9.300 15H12.700" stroke="#c8c8c8" stroke-width="1" fill="none"/></svg>
<div class="dd" style="left:1054px;top:450px;width:81.500px;height:21px;border-radius:2px"></div>
<div class="dv" style="left:1074px;top:451px;height:19px"></div><div class="dv" style="left:1117px;top:451px;height:19px"></div>
<svg style="left:1060.5px;top:453px" width="8" height="15" viewBox="0 0 8 15"><path d="M0.500 4.500L4 0.800L7.500 4.500M0.500 10.500L4 14.200L7.500 10.500" fill="none" stroke="#d0d0d0" stroke-width="1.100"/></svg>
<span class="t" style="left:1078px;top:454.500px;font-size:13px;color:#f2f2f2;overflow:hidden;max-width:38px">(14.4 点</span>
<svg style="left:1122.5px;top:458.5px" width="8" height="5" viewBox="0 0 8 5"><path d="M0.700 0.700L4.0 4.2L7.3 0.700" fill="none" stroke="#d8d8d8" stroke-width="1.200"/></svg>
<svg style="left:916px;top:479px" width="6" height="15" viewBox="0 0 6 15"><path d="M3 1V14M0.800 3.500L3 0.800L5.200 3.500M0.800 11.500L3 14.200L5.200 11.500" stroke="#c8c8c8" stroke-width="1.100" fill="none"/></svg>
<svg style="left:922px;top:479.5px" width="12.5" height="14" viewBox="0 0 13 13"><path d="M0.300 0.200H12.700V4.400H11.300C11.100 3 10.800 2.700 9.500 2.700H8.100V10.200C8.100 11 8.400 11.200 9.900 11.300V13H3.100V11.300C4.600 11.200 4.900 11 4.900 10.200V2.700H3.500C2.200 2.700 1.900 3 1.700 4.400H0.300z" fill="#c8c8c8"/></svg>
<div class="dd" style="left:939px;top:476px;width:79.500px;height:21px;border-radius:2px"></div>
<div class="dv" style="left:959px;top:477px;height:19px"></div><div class="dv" style="left:1000px;top:477px;height:19px"></div>
<svg style="left:945.5px;top:479px" width="8" height="15" viewBox="0 0 8 15"><path d="M0.500 4.500L4 0.800L7.500 4.500M0.500 10.500L4 14.200L7.500 10.500" fill="none" stroke="#d0d0d0" stroke-width="1.100"/></svg>
<span class="t" style="left:964px;top:480.0px;font-size:13px;color:#f2f2f2;overflow:hidden;max-width:35px;letter-spacing:-0.700px">100%</span>
<svg style="left:1005.5px;top:484.5px" width="8" height="5" viewBox="0 0 8 5"><path d="M0.700 0.700L4.0 4.2L7.3 0.700" fill="none" stroke="#d8d8d8" stroke-width="1.200"/></svg>
<svg style="left:1034.5px;top:477px" width="13" height="12.5" viewBox="0 0 13 13"><path d="M0.300 0.200H12.700V4.400H11.300C11.100 3 10.800 2.700 9.500 2.700H8.100V10.200C8.100 11 8.400 11.200 9.900 11.300V13H3.100V11.300C4.600 11.200 4.900 11 4.900 10.200V2.700H3.500C2.200 2.700 1.900 3 1.700 4.400H0.300z" fill="#c8c8c8"/></svg>
<svg style="left:1032px;top:490px" width="18" height="7" viewBox="0 0 18 7"><path d="M1 3.500H17M3.500 1L0.800 3.500L3.500 6M14.500 1L17.200 3.500L14.500 6" stroke="#c8c8c8" stroke-width="1.100" fill="none"/></svg>
<div class="dd" style="left:1054px;top:476px;width:81.500px;height:21px;border-radius:2px"></div>
<div class="dv" style="left:1074px;top:477px;height:19px"></div><div class="dv" style="left:1117px;top:477px;height:19px"></div>
<svg style="left:1060.5px;top:479px" width="8" height="15" viewBox="0 0 8 15"><path d="M0.500 4.500L4 0.800L7.500 4.500M0.500 10.500L4 14.200L7.500 10.500" fill="none" stroke="#d0d0d0" stroke-width="1.100"/></svg>
<span class="t" style="left:1079px;top:480.0px;font-size:13px;color:#f2f2f2;overflow:hidden;max-width:37px;letter-spacing:-0.700px">100%</span>
<svg style="left:1122.5px;top:484.5px" width="8" height="5" viewBox="0 0 8 5"><path d="M0.700 0.700L4.0 4.2L7.3 0.700" fill="none" stroke="#d8d8d8" stroke-width="1.200"/></svg>
<svg style="left:1126px;top:511px" width="14" height="4" viewBox="0 0 14 4"><circle cx="2" cy="2" r="1.700" fill="#b4b4b4"/><circle cx="7" cy="2" r="1.700" fill="#b4b4b4"/><circle cx="12" cy="2" r="1.700" fill="#b4b4b4"/></svg>
<div style="left:906px;top:526px;width:240px;height:1px;background:#4a4a4a"></div>
<span class="t" style="left:916.500px;top:539.0px;color:#ececec">段落</span>
<div style="left:991px;top:560px;width:21.500px;height:20px;background:#2e2e2e;border-radius:3px"></div>
<svg style="left:921px;top:563px" width="15" height="15" viewBox="0 0 15 15"><path d="M0 1.500H12M0 4.500H15M0 7.500H12M0 10.500H15M0 13.500H12" stroke="#cdcdcd" stroke-width="1" fill="none" shape-rendering="crispEdges"/></svg><svg style="left:944px;top:563px" width="16" height="15" viewBox="0 0 16 15"><path d="M2.200 1.500H13.800M0 4.500H16M2.200 7.500H13.800M0 10.500H16M2.200 13.500H13.800" stroke="#cdcdcd" stroke-width="1" fill="none" shape-rendering="crispEdges"/></svg><svg style="left:968px;top:563px" width="15" height="15" viewBox="0 0 15 15"><path d="M3 1.500H15M0 4.500H15M3 7.500H15M0 10.500H15M3 13.500H15" stroke="#cdcdcd" stroke-width="1" fill="none" shape-rendering="crispEdges"/></svg><svg style="left:995px;top:563px" width="14" height="15" viewBox="0 0 14 15"><path d="M0 1.500H14M0 4.500H14M0 7.500H14M0 10.500H14M0 13.500H10" stroke="#cdcdcd" stroke-width="1" fill="none" shape-rendering="crispEdges"/></svg><svg style="left:1019px;top:563px" width="14" height="15" viewBox="0 0 14 15"><path d="M0 1.500H14M0 4.500H14M0 7.500H14M0 10.500H14M2 13.500H12" stroke="#cdcdcd" stroke-width="1" fill="none" shape-rendering="crispEdges"/></svg><svg style="left:1043px;top:563px" width="14" height="15" viewBox="0 0 14 15"><path d="M0 1.500H14M0 4.500H14M0 7.500H14M0 10.500H14M4 13.500H14" stroke="#cdcdcd" stroke-width="1" fill="none" shape-rendering="crispEdges"/></svg><svg style="left:1067px;top:563px" width="14" height="15" viewBox="0 0 14 15"><path d="M0 1.500H14M0 4.500H14M0 7.500H14M0 10.500H14M0 13.500H14" stroke="#cdcdcd" stroke-width="1" fill="none" shape-rendering="crispEdges"/></svg><svg style="left:1092.8px;top:563px" width="15" height="15" viewBox="0 0 15 15"><path d="M2.300 1.500H11.300M0 4.500H11.300M2.300 7.500H11.300M0 10.500H11.300M2.300 13.500H11.300M13.500 0V15" stroke="#cdcdcd" stroke-width="1" fill="none" shape-rendering="crispEdges"/></svg><svg style="left:1117px;top:563px" width="15" height="15" viewBox="0 0 15 15"><path d="M0 1.500H9M0 4.500H11.300M0 7.500H9M0 10.500H11.300M0 13.500H9M13.500 0V15" stroke="#cdcdcd" stroke-width="1" fill="none" shape-rendering="crispEdges"/></svg>
<div style="left:989px;top:576px;width:41px;height:27.500px;background:#fff;box-shadow:0 0 3px rgba(0,0,0,.25)"></div>
<span class="t" style="left:996.500px;top:583.500px;font-size:11px;letter-spacing:-0.600px;color:#3a3a3a">UZZF</span>
<svg style="left:1126px;top:597px" width="14" height="4" viewBox="0 0 14 4"><circle cx="2" cy="2" r="1.700" fill="#b4b4b4"/><circle cx="7" cy="2" r="1.700" fill="#b4b4b4"/><circle cx="12" cy="2" r="1.700" fill="#b4b4b4"/></svg>
<div style="left:906px;top:612px;width:240px;height:1px;background:#4a4a4a"></div>
<span class="t" style="left:916.500px;top:625.0px;color:#ececec">项目符号和编号</span>
<svg style="left:920px;top:650px" width="17" height="14" viewBox="0 0 17 14"><circle cx="2.900" cy="3" r="1.900" fill="#c8c8c8"/><circle cx="2.900" cy="11" r="1.900" fill="#c8c8c8"/><path d="M6 1.500H16M6 4.500H15M6 9.500H16M6 12.500H15" stroke="#c8c8c8" stroke-width="1.100"/></svg>
<svg style="left:952px;top:650px" width="17" height="14" viewBox="0 0 17 14"><path d="M1.300 1.800L2.500 1V5.500M1 9.300C1.500 8.300 3.500 8.500 3.300 9.900C3.200 10.900 1.700 11.800 1 13H3.800" stroke="#c8c8c8" stroke-width="0.900" fill="none"/><path d="M6 1.500H16M6 4.500H15M6 9.500H16M6 12.500H15" stroke="#c8c8c8" stroke-width="1.100"/></svg>
<div style="left:1071px;top:645px;width:65px;height:20px;border:1px solid #727272;border-radius:2px"></div>
<span class="t" style="left:1090.5px;top:649.5px;color:#f2f2f2">选项</span>
<div style="left:906px;top:675.5px;width:240px;height:1px;background:#4a4a4a"></div>
<span class="t" style="left:916.500px;top:683.5px;color:#ececec">快速操作</span>

</div>
</body>
</html>
